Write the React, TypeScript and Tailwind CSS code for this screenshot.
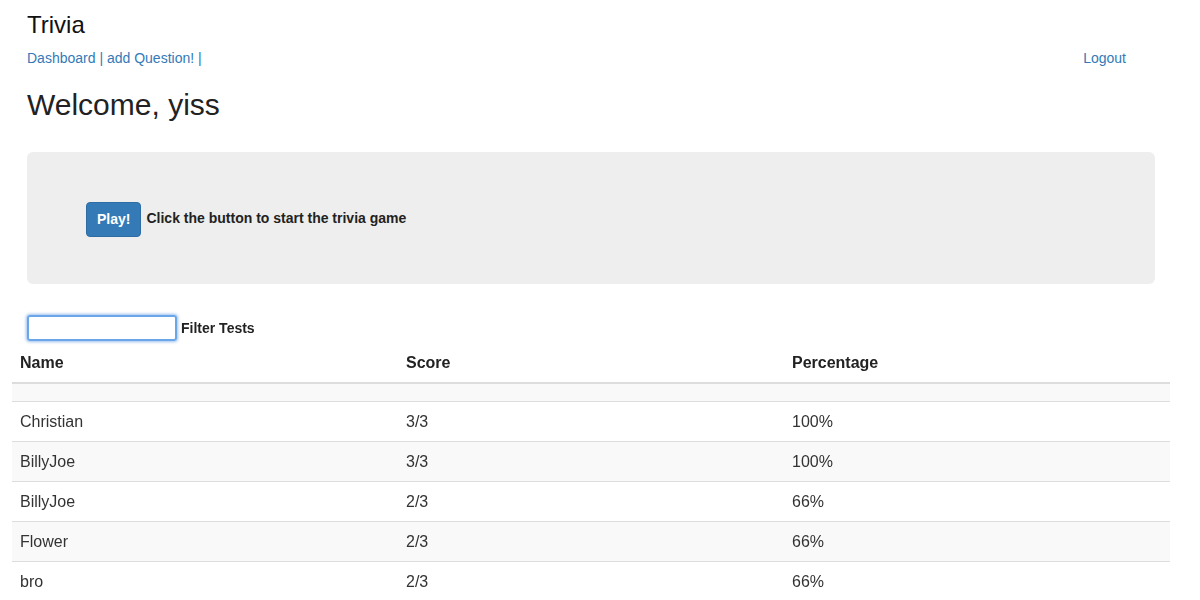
import React from "react";

const results = [
  { name: "Christian", score: "3/3", pct: "100%" },
  { name: "BillyJoe", score: "3/3", pct: "100%" },
  { name: "BillyJoe", score: "2/3", pct: "66%" },
  { name: "Flower", score: "2/3", pct: "66%" },
  { name: "bro", score: "2/3", pct: "66%" },
];

export default function App() {
  return (
    <div className="min-h-[600px] bg-white pl-[12px] pr-[30px] text-[#333] font-['Liberation_Sans',Arial,sans-serif]">
      <div className="px-[15px]">
        <h1 className="pt-[11px] text-[24px] leading-[28px] text-[#111]">Trivia</h1>
        <div className="mt-[9px] flex items-center justify-between text-[14px] leading-[20px] text-[#337ab7]">
          <div>
            <a href="#">Dashboard</a> | <a href="#">add Question!</a> |
          </div>
          <a href="#" className="mr-[29px]">Logout</a>
        </div>
        <h2 className="mt-[20px] text-[30px] leading-[34px] text-[#222]">Welcome, yiss</h2>
        <div className="mt-[30px] flex h-[132px] items-center rounded-[6px] bg-[#eee] pl-[59px]">
          <button className="mt-[2px] h-[35px] rounded-[4px] border border-[#2e6da4] bg-[#337ab7] px-[10px] text-[14px] font-bold text-white">
            Play!
          </button>
          <span className="ml-[5px] text-[14px] font-bold text-[#222]">
            Click the button to start the trivia game
          </span>
        </div>
        <div className="mt-[31px] flex items-center">
          <input
            autoFocus
            className="h-[26px] w-[150px] rounded-[3px] border-2 border-[#6aa6e8] px-[2px] text-[14px] shadow-[0_0_3px_1px_rgba(90,150,230,0.6)] outline-none"
          />
          <span className="ml-[4px] text-[14px] font-bold text-[#222]">Filter Tests</span>
        </div>
      </div>
      <table className="mt-[1px] w-full border-collapse text-[16px] leading-[23px]">
        <thead>
          <tr className="border-b-2 border-[#ddd]">
            <th className="w-1/3 px-[8px] pb-[8px] pt-[9px] text-left font-bold text-[#222]">Name</th>
            <th className="w-1/3 px-[8px] pb-[8px] pt-[9px] text-left font-bold text-[#222]">Score</th>
            <th className="w-1/3 px-[8px] pb-[8px] pt-[9px] text-left font-bold text-[#222]">Percentage</th>
          </tr>
        </thead>
        <tbody>
          <tr className="h-[18px] border-b border-[#ddd] bg-[#f9f9f9]">
            <td></td>
            <td></td>
            <td></td>
          </tr>
          {results.map((r, i) => (
            <tr key={i} className={`border-b border-[#ddd] ${i % 2 === 1 ? "bg-[#f9f9f9]" : "bg-white"}`}>
              <td className="px-[8px] py-[8px]">{r.name}</td>
              <td className="px-[8px] py-[8px]">{r.score}</td>
              <td className="px-[8px] py-[8px]">{r.pct}</td>
            </tr>
          ))}
        </tbody>
      </table>
    </div>
  );
}
